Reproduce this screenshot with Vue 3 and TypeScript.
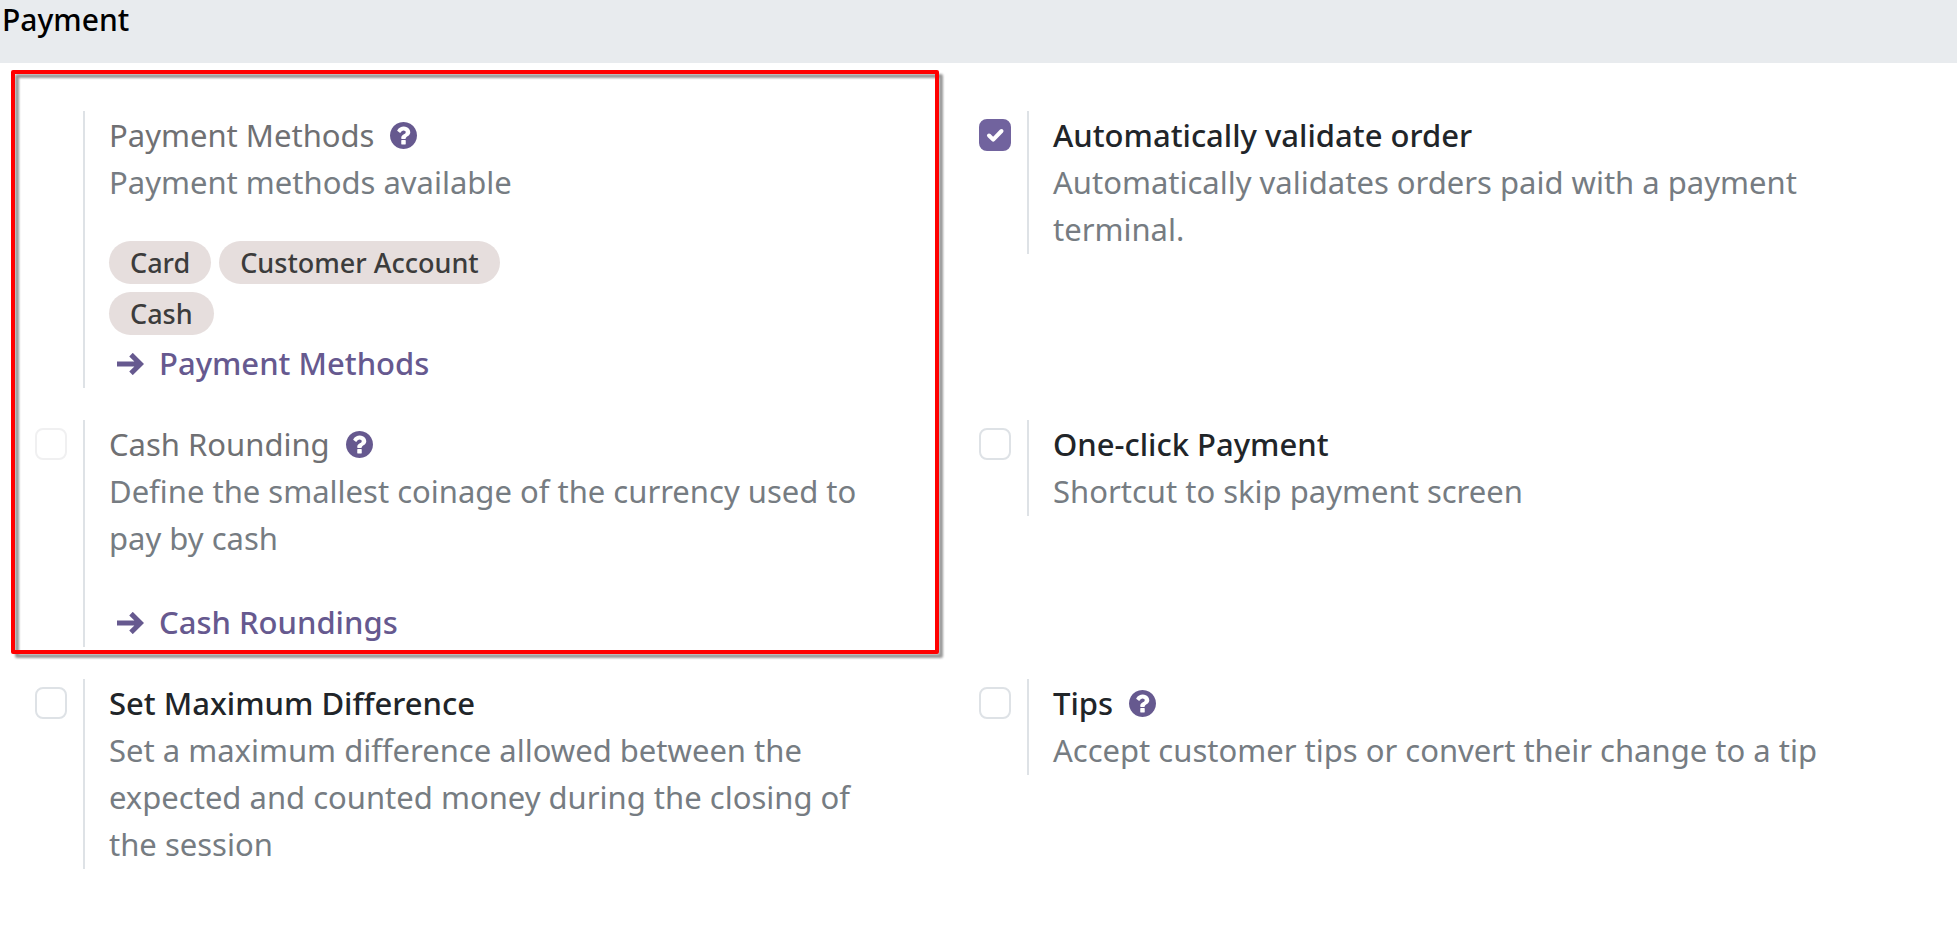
<script setup lang="ts">
import { reactive } from 'vue'

interface Setting {
  id: string
  title: string
  description: string
  checked?: boolean
  hasCheckbox: boolean
  muted?: boolean
  help?: boolean
  tags?: string[]
  link?: string
}

const settings = reactive<Setting[]>([
  {
    id: 'payment-methods',
    title: 'Payment Methods',
    description: 'Payment methods available',
    hasCheckbox: false,
    muted: true,
    help: true,
    tags: ['Card', 'Customer Account', 'Cash'],
    link: 'Payment Methods',
  },
  {
    id: 'auto-validate',
    title: 'Automatically validate order',
    description: 'Automatically validates orders paid with a payment terminal.',
    hasCheckbox: true,
    checked: true,
  },
  {
    id: 'cash-rounding',
    title: 'Cash Rounding',
    description: 'Define the smallest coinage of the currency used to pay by cash',
    hasCheckbox: true,
    checked: false,
    muted: true,
    help: true,
    link: 'Cash Roundings',
  },
  {
    id: 'one-click',
    title: 'One-click Payment',
    description: 'Shortcut to skip payment screen',
    hasCheckbox: true,
    checked: false,
  },
  {
    id: 'max-difference',
    title: 'Set Maximum Difference',
    description:
      'Set a maximum difference allowed between the expected and counted money during the closing of the session',
    hasCheckbox: true,
    checked: false,
  },
  {
    id: 'tips',
    title: 'Tips',
    description: 'Accept customer tips or convert their change to a tip',
    hasCheckbox: true,
    checked: false,
    help: true,
  },
])
</script>

<template>
  <main class="page">
    <h2 class="heading">Payment</h2>
    <div class="settings">
      <section v-for="s in settings" :key="s.id" class="setting" :class="{ muted: s.muted }">
        <div class="left">
          <span v-if="s.hasCheckbox" class="check">
            <input :id="s.id" v-model="s.checked" type="checkbox" :disabled="s.muted" />
            <svg v-if="s.checked" class="tick" viewBox="0 0 32 32" aria-hidden="true">
              <path d="M10 16.5l4.2 4.2L22.5 12" />
            </svg>
          </span>
        </div>
        <div class="right">
          <div class="title">
            <label v-if="s.hasCheckbox" :for="s.id">{{ s.title }}</label>
            <span v-else>{{ s.title }}</span>
            <svg v-if="s.help" class="help" viewBox="128 128 1536 1536" aria-hidden="true">
              <path
                d="M1024 1376v-192q0-14-9-23t-23-9h-192q-14 0-23 9t-9 23v192q0 14 9 23t23 9h192q14 0 23-9t9-23zm256-672q0-88-55.500-163t-138.500-116-170-41q-243 0-371 213-15 24 8 42l132 100q7 6 19 6 16 0 25-12 53-68 86-92 34-24 86-24 48 0 85.500 26t37.500 59q0 38-20 61t-68 45q-63 28-115.500 86.500t-52.500 125.500v36q0 14 9 23t23 9h192q14 0 23-9t9-23q0-19 21.500-49.500t54.500-49.500q32-18 49-28.500t46-35 44.500-48 28-60.500 12.500-81zm384 192q0 209-103 385.500t-279.500 279.500-385.500 103-385.500-103-279.500-279.500-103-385.500 103-385.500 279.500-279.500 385.500-103 385.500 103 279.500 279.500 103 385.500z"
              />
            </svg>
          </div>
          <p class="description">{{ s.description }}</p>
          <div v-if="s.tags" class="tags">
            <span v-for="t in s.tags" :key="t" class="tag">{{ t }}</span>
          </div>
          <a v-if="s.link" class="link" :class="{ spaced: !s.tags }" href="#">
            <svg class="arrow" viewBox="0 0 27 22" aria-hidden="true">
              <path d="M0 11H23M14 1.600L23.500 11L14 20.400" />
            </svg>
            <span>{{ s.link }}</span>
          </a>
        </div>
      </section>
      <div class="frame" aria-hidden="true"></div>
    </div>
  </main>
</template>

<style>
body {
  margin: 0;
  background: #ffffff;
}
</style>

<style scoped>
.page {
  font-family: 'Noto Sans', sans-serif;
  font-size: 31px;
  line-height: 47px;
  color: #212529;
}
.heading {
  margin: 0;
  padding: 0 2px 23px;
  background: #e8ebee;
  color: #000000;
  font-size: 30px;
  font-weight: 500;
  line-height: 40px;
}
.settings {
  position: relative;
  display: grid;
  grid-template-columns: 1fr 1fr;
  row-gap: 32px;
  align-items: start;
  padding: 48px 50px 48px 19px;
}
.setting {
  display: flex;
  padding: 0 64px 0 16px;
}
.left {
  flex: 0 0 48px;
  padding-top: 8px;
}
.check {
  position: relative;
  display: block;
  width: 32px;
  height: 32px;
}
.check input {
  appearance: none;
  display: block;
  box-sizing: border-box;
  width: 32px;
  height: 32px;
  margin: 0;
  border: 2px solid #dee2e6;
  border-radius: 8px;
  background: #ffffff;
}
.check input:checked {
  border-color: #71639e;
  background: #71639e;
}
.check input:disabled {
  border-color: #f0f0f1;
}
.tick {
  position: absolute;
  inset: 0;
  fill: none;
  stroke: #ffffff;
  stroke-width: 4;
  stroke-linecap: round;
  stroke-linejoin: round;
  pointer-events: none;
}
.right {
  flex: 1;
  min-width: 0;
  padding: 1px 0 1px 24px;
  border-left: 2px solid #dee2e6;
}
.title {
  display: flex;
  align-items: center;
  gap: 16px;
  font-weight: 500;
}
.muted .title {
  color: #6f7073;
  font-weight: 400;
}
.help {
  width: 27px;
  height: 27px;
  fill: #66598f;
}
.description {
  margin: 0;
  color: #767c82;
}
.tags {
  display: flex;
  flex-wrap: wrap;
  gap: 8px;
  max-width: 440px;
  margin: 35px 0 5px;
}
.tag {
  padding: 0 21px;
  border-radius: 22px;
  background: #e6dedd;
  color: #3c3c3c;
  font-size: 27px;
  font-weight: 500;
  line-height: 43px;
}
.link {
  display: flex;
  align-items: center;
  gap: 15px;
  width: fit-content;
  padding-left: 8px;
  color: #66598f;
  font-weight: 500;
  text-decoration: none;
}
.link.spaced {
  margin-top: 37px;
}
.arrow {
  width: 27px;
  height: 22px;
  fill: none;
  stroke: #66598f;
  stroke-width: 5;
}
.frame {
  position: absolute;
  grid-area: 1 / 1 / 3 / 2;
  inset: -41px 24px -7px -8px;
  border: 4px solid #ff0000;
  border-radius: 2px;
  filter: drop-shadow(4px 4px 1px rgba(0, 0, 0, 0.4));
  pointer-events: none;
}
</style>
